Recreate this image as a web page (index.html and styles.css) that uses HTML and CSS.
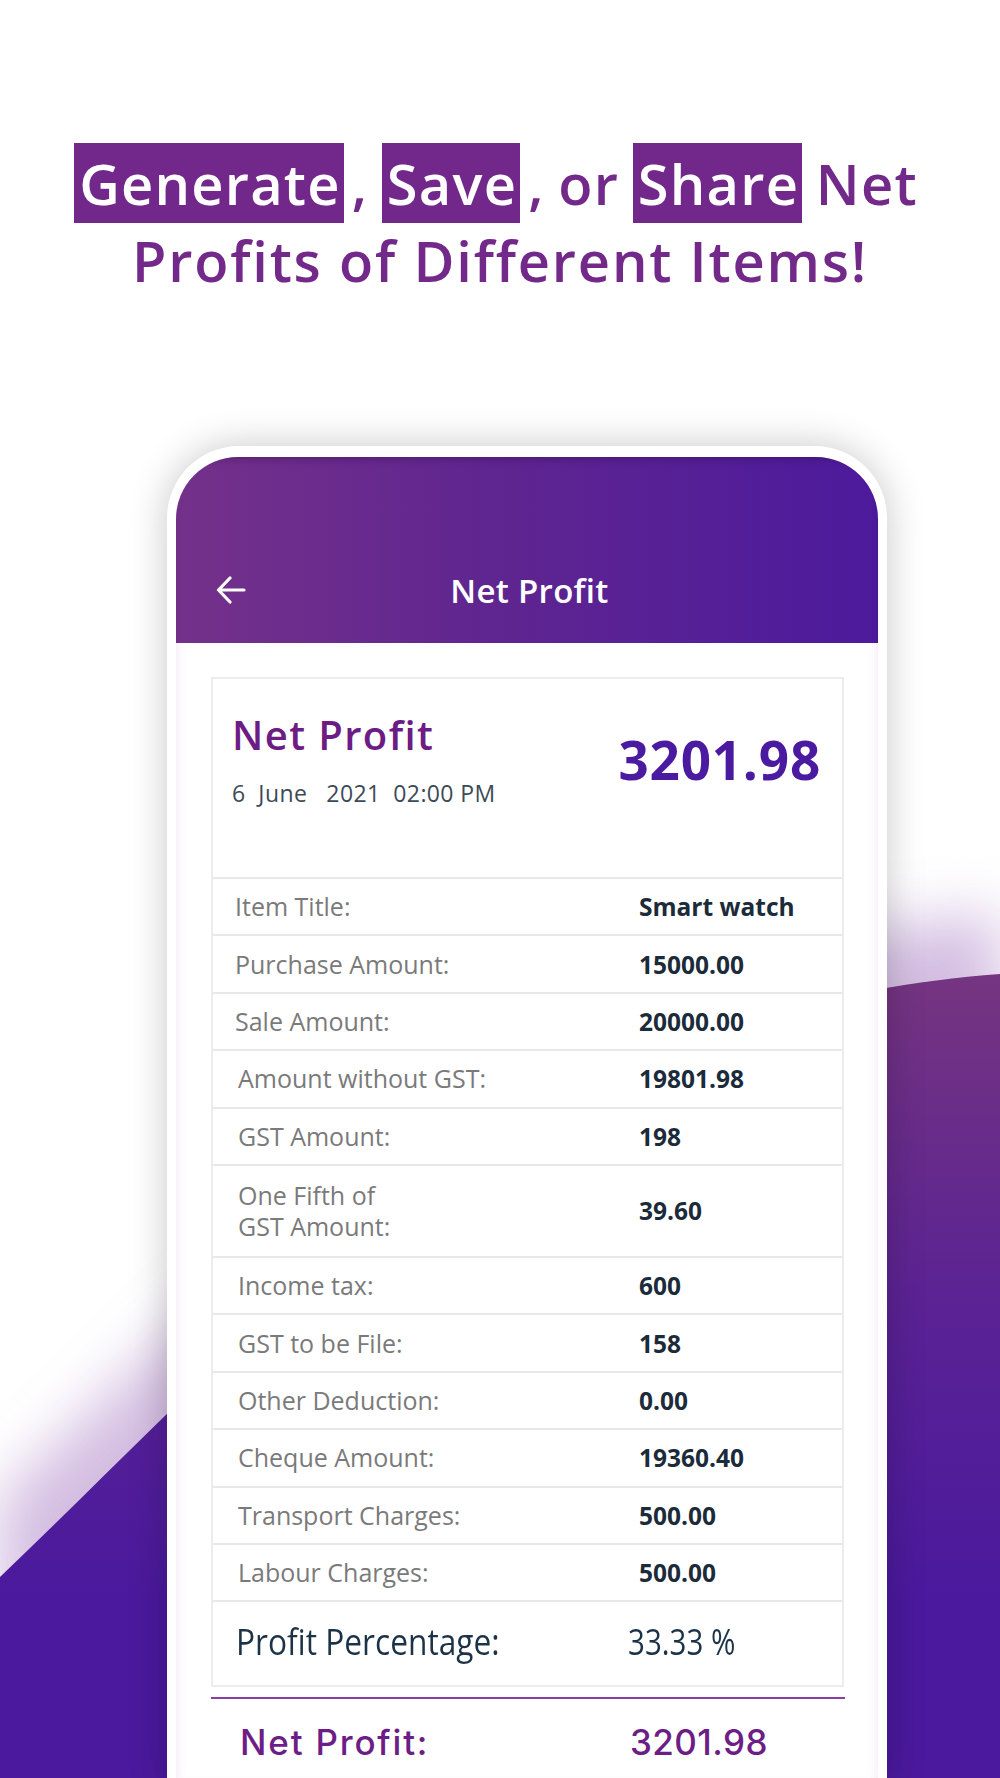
FILE: index.html
```html
<!DOCTYPE html>
<html lang="en">
<head>
<meta charset="utf-8">
<title>Net Profit</title>
<link rel="stylesheet" href="styles.css">
</head>
<body>
<svg class="bg" viewBox="0 0 1000 1778" preserveAspectRatio="none" aria-hidden="true">
  <defs>
    <linearGradient id="wave" x1="0" y1="950" x2="0" y2="1600" gradientUnits="userSpaceOnUse">
      <stop offset="0" stop-color="#77367f"/>
      <stop offset="0.55" stop-color="#5a2294"/>
      <stop offset="1" stop-color="#4a199d"/>
    </linearGradient>
    <filter id="blur" x="-20%" y="-20%" width="140%" height="140%">
      <feGaussianBlur stdDeviation="30"/>
    </filter>
  </defs>
  <path class="haze" d="M0,1500 C280,1235 520,955 1000,915 L1000,1778 L0,1778 Z" filter="url(#blur)"/>
  <path d="M0,1577 C280,1310 520,1010 1000,974 L1000,1778 L0,1778 Z" fill="url(#wave)"/>
</svg>

<main class="page">
  <h1 class="headline">
    <span class="line1"><span class="hl">Generate</span><span class="comma">,</span> <span class="hl">Save</span><span class="comma">,</span> or <span class="hl">Share</span> Net</span>
    <span class="line2">Profits of Different Items!</span>
  </h1>

  <section class="phone">
    <div class="screen">
      <header class="appbar">
        <span class="back">
          <svg width="30" height="28" viewBox="0 0 30 28" aria-hidden="true">
            <path d="M28 14 H3 M14 2 L2.5 14 L14 26" fill="none" stroke="#ffffff" stroke-width="3.2" stroke-linecap="round" stroke-linejoin="round"/>
          </svg>
        </span>
        <span class="appbar-title">Net Profit</span>
        <span></span>
      </header>

      <div class="card">
        <div class="summary">
          <div class="summary-left">
            <div class="summary-title">Net Profit</div>
            <div class="summary-date">6  June   2021  02:00 PM</div>
          </div>
          <div class="summary-value">3201.98</div>
        </div>

        <div class="row"><span class="label">Item Title:</span><span class="value">Smart watch</span></div>
        <div class="row"><span class="label">Purchase Amount:</span><span class="value">15000.00</span></div>
        <div class="row"><span class="label">Sale Amount:</span><span class="value">20000.00</span></div>
        <div class="row ind"><span class="label">Amount without GST:</span><span class="value">19801.98</span></div>
        <div class="row ind"><span class="label">GST Amount:</span><span class="value">198</span></div>
        <div class="row ind tall"><span class="label">One Fifth of<br>GST Amount:</span><span class="value">39.60</span></div>
        <div class="row ind"><span class="label">Income tax:</span><span class="value">600</span></div>
        <div class="row ind"><span class="label">GST to be File:</span><span class="value">158</span></div>
        <div class="row ind"><span class="label">Other Deduction:</span><span class="value">0.00</span></div>
        <div class="row ind"><span class="label">Cheque Amount:</span><span class="value">19360.40</span></div>
        <div class="row ind"><span class="label">Transport Charges:</span><span class="value">500.00</span></div>
        <div class="row ind"><span class="label">Labour Charges:</span><span class="value">500.00</span></div>
        <div class="row pct"><span class="pct-label">Profit Percentage:</span><span class="pct-value">33.33 %</span></div>
      </div>

      <div class="divider"></div>

      <div class="net-row">
        <span class="net-label">Net Profit:</span>
        <span class="net-value">3201.98</span>
      </div>
    </div>
  </section>
</main>
</body>
</html>
```

FILE: styles.css
```css
* { box-sizing: border-box; }

html, body {
  margin: 0;
  padding: 0;
}

body {
  width: 1000px;
  height: 1778px;
  overflow: hidden;
  position: relative;
  background: #ffffff;
  font-family: "Open Sans", "Noto Sans", sans-serif;
}

.bg {
  position: absolute;
  left: 0;
  top: 0;
  width: 1000px;
  height: 1778px;
  z-index: 0;
}

.haze {
  fill: #c7acd9;
  opacity: 0.8;
}

.page {
  position: relative;
  z-index: 1;
  display: flex;
  flex-direction: column;
}

/* Headline */
.headline {
  margin: 0;
  padding-top: 143px;
  display: flex;
  flex-direction: column;
  align-items: center;
  font-weight: 600;
  font-size: 56px;
  letter-spacing: 1.2px;
  color: #72298a;
}

.line1 {
  display: block;
  height: 80px;
  line-height: 80px;
  white-space: pre;
  word-spacing: -2px;
  margin-right: 8px;
}

.hl {
  display: inline-block;
  height: 80px;
  line-height: 80px;
  padding: 0 3px 0 5px;
  background: #72278a;
  color: #ffffff;
}

.comma {
  margin-left: 8px;
}

.line2 {
  display: block;
  margin-top: 7px;
  line-height: 60px;
  height: 60px;
  letter-spacing: 1.8px;
}

/* Phone */
.phone {
  margin-top: 156px;
  margin-left: 167px;
  width: 720px;
  height: 1340px;
  background: #ffffff;
  border-radius: 72px 72px 0 0;
  padding: 11px 9px 0 9px;
  box-shadow: 0 0 38px rgba(0, 0, 0, 0.22);
}

.screen {
  height: 100%;
  border-radius: 62px 62px 0 0;
  overflow: hidden;
  background: #ffffff;
  box-shadow: inset 0 0 12px rgba(140, 70, 170, 0.14);
}

.appbar {
  height: 186px;
  background: linear-gradient(90deg, #74318a 0%, #5f2590 45%, #4c1a9c 100%);
  box-shadow: inset 0 6px 8px -4px rgba(40, 10, 60, 0.35);
  display: grid;
  grid-template-columns: 1fr auto 1fr;
  align-items: center;
  padding-top: 80px;
  color: #ffffff;
}

.back {
  padding-left: 40px;
  display: flex;
  align-items: center;
}

.appbar-title {
  font-size: 33px;
  font-weight: 600;
  letter-spacing: 0.3px;
  padding-left: 5px;
}

/* Card */
.card {
  margin: 34px 0 0 35px;
  width: 633px;
  border: 2px solid #ececec;
  background: #ffffff;
}

.summary {
  height: 198px;
  display: flex;
  justify-content: space-between;
  align-items: flex-start;
  padding: 32px 21px 0 19px;
}

.summary-title {
  font-size: 40px;
  line-height: 48px;
  font-weight: 600;
  color: #6c1c84;
  letter-spacing: 1.4px;
}

.summary-date {
  margin-top: 19px;
  font-size: 23px;
  line-height: 30px;
  color: #3c4a56;
  white-space: pre;
  letter-spacing: 0.4px;
}

.summary-value {
  margin-top: 19px;
  font-size: 53px;
  line-height: 60px;
  font-weight: 700;
  color: #4a1aa0;
  letter-spacing: 0.8px;
}

.row {
  display: grid;
  grid-template-columns: 404px 1fr;
  align-items: center;
  height: 57.4px;
  border-top: 2px solid #e8e8e8;
  padding-left: 22px;
}

.row.ind {
  padding-left: 25px;
}

.row.ind .value {
  margin-left: -3px;
}

.row.tall {
  height: 92px;
}

.label {
  font-size: 25px;
  line-height: 31px;
  color: #7a7a7a;
}

.value {
  font-size: 24.5px;
  font-weight: 700;
  color: #1b2b3a;
}

.row.pct {
  height: 85px;
  grid-template-columns: 392px 1fr;
  padding-left: 23px;
  padding-bottom: 4px;
}

.pct-label,
.pct-value {
  display: inline-block;
  justify-self: start;
  font-family: "Open Sans", sans-serif;
  font-size: 36px;
  color: #1c3347;
  transform-origin: left center;
  white-space: nowrap;
}

.pct-label {
  transform: scaleX(0.88);
}

.pct-value {
  transform: scaleX(0.82);
}

.divider {
  margin: 10px 0 0 35px;
  width: 634px;
  height: 2px;
  background: #8b3da6;
}

.net-row {
  display: grid;
  grid-template-columns: 390px 1fr;
  align-items: center;
  padding: 22px 0 0 64px;
  color: #6d1d86;
  font-family: "Inter", "Lato", sans-serif;
  font-size: 35px;
  font-weight: 500;
}

.net-label {
  letter-spacing: 1.8px;
}

.net-value {
  letter-spacing: 0.4px;
}
```
